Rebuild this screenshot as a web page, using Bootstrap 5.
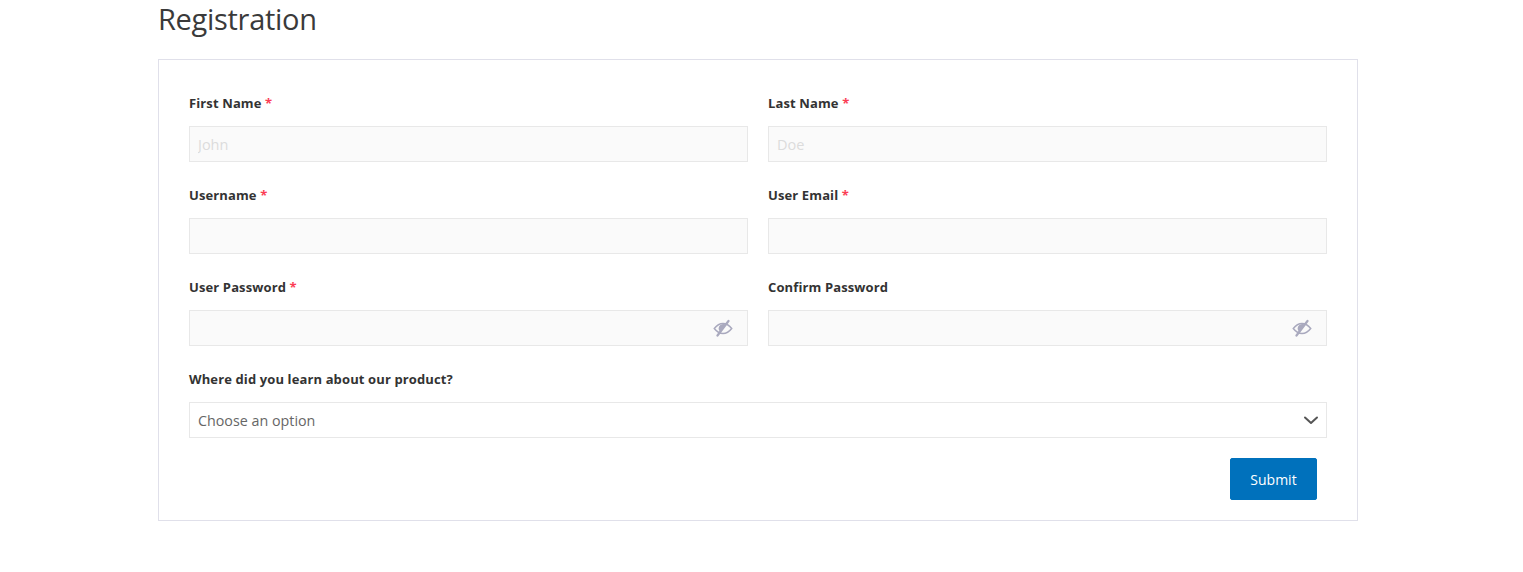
<!DOCTYPE html>
<html lang="en">
<head>
<meta charset="utf-8">
<title>Registration</title>
<link rel="stylesheet" href="https://cdn.jsdelivr.net/npm/bootstrap@5.3.0/dist/css/bootstrap.min.css">
<style>
body { font-family: "Open Sans", "Noto Sans", sans-serif; color: #333; background: #fff; }
.page-wrap { width: 1200px; margin-left: 158px; }
.page-title { font-size: 29px; font-weight: 400; line-height: 38px; margin: 0 0 21px; color: #3a3a3a; letter-spacing: -.3px; }
.reg-box { border: 1px solid #e0e0ea; padding: 32px 30px 20px; border-radius: 0; }
.form-cols { --bs-gutter-x: 20px; --bs-gutter-y: 0; }
.field { margin-bottom: 22px; }
.field-wide { margin-bottom: 20px; }
.field-label { display: block; font-size: 13px; letter-spacing: .12px; font-weight: 700; line-height: 22px; margin-bottom: 12px; color: #333; }
.req { color: #fb3d55; }
.reg-input.form-control { height: 36px; border: 1px solid #e8e8e8; border-radius: 0; background: #fafafa; padding: 6px 8px; font-size: 14.5px; box-shadow: none; }
.reg-input.form-control::placeholder { color: #dcdcdc; opacity: 1; }
.pw-wrap { position: relative; }
.eye-icon { position: absolute; right: 15px; top: 9px; width: 20px; height: 18px; }
.reg-select.form-select { height: 36px; border: 1px solid #e8e8e8; border-radius: 0; padding: 7px 8px 5px; font-size: 14.3px; color: #666; background-size: 18px 13px; background-position: right 6px center;
  background-image: url("data:image/svg+xml,%3csvg xmlns='http://www.w3.org/2000/svg' viewBox='0 0 18 13'%3e%3cpath fill='none' stroke='%23555' stroke-width='2' stroke-linecap='round' stroke-linejoin='round' d='M3 3.500l6 5.500 6-5.500'/%3e%3c/svg%3e"); }
.submit-btn.btn { width: 87px; height: 42px; background: #0071bc; border: 1px solid #0071bc; border-radius: 2px; color: #fff; font-size: 14px; padding: 0; margin-right: 10px; }
</style>
</head>
<body>
<div class="page-wrap">
  <h1 class="page-title">Registration</h1>
  <form class="reg-box">
    <div class="row form-cols">
      <div class="col-6 field">
        <label class="field-label">First Name <span class="req">*</span></label>
        <input class="form-control reg-input" type="text" placeholder="John">
      </div>
      <div class="col-6 field">
        <label class="field-label">Last Name <span class="req">*</span></label>
        <input class="form-control reg-input" type="text" placeholder="Doe">
      </div>
      <div class="col-6 field">
        <label class="field-label">Username <span class="req">*</span></label>
        <input class="form-control reg-input" type="text">
      </div>
      <div class="col-6 field">
        <label class="field-label">User Email <span class="req">*</span></label>
        <input class="form-control reg-input" type="email">
      </div>
      <div class="col-6 field">
        <label class="field-label">User Password <span class="req">*</span></label>
        <div class="pw-wrap">
          <input class="form-control reg-input" type="password">
          <svg class="eye-icon" viewBox="0 0 20 18" fill="none" stroke="#a9a9be"><path stroke-width="1.500" d="M1.300 9.500C4 6 7 4.500 10 4.500s6 1.500 8.700 5C16 13 13 14.500 10 14.500S4 13 1.300 9.500z"/><path fill="#a9a9be" stroke="none" d="M10 5a4.500 4.500 0 0 0-3.300 7.500l6.200-6.800A4.500 4.500 0 0 0 10 5z"/><path stroke-width="2.200" stroke-linecap="round" d="M4.500 16.500L15.500 2"/></svg>
        </div>
      </div>
      <div class="col-6 field">
        <label class="field-label">Confirm Password</label>
        <div class="pw-wrap">
          <input class="form-control reg-input" type="password">
          <svg class="eye-icon" viewBox="0 0 20 18" fill="none" stroke="#a9a9be"><path stroke-width="1.500" d="M1.300 9.500C4 6 7 4.500 10 4.500s6 1.500 8.700 5C16 13 13 14.500 10 14.500S4 13 1.300 9.500z"/><path fill="#a9a9be" stroke="none" d="M10 5a4.500 4.500 0 0 0-3.300 7.500l6.200-6.800A4.500 4.500 0 0 0 10 5z"/><path stroke-width="2.200" stroke-linecap="round" d="M4.500 16.500L15.500 2"/></svg>
        </div>
      </div>
      <div class="col-12 field field-wide">
        <label class="field-label">Where did you learn about our product?</label>
        <select class="form-select reg-select"><option>Choose an option</option></select>
      </div>
    </div>
    <div class="d-flex justify-content-end">
      <button type="button" class="btn submit-btn">Submit</button>
    </div>
  </form>
</div>
<script src="https://cdn.jsdelivr.net/npm/bootstrap@5.3.0/dist/js/bootstrap.bundle.min.js"></script>
</body>
</html>
